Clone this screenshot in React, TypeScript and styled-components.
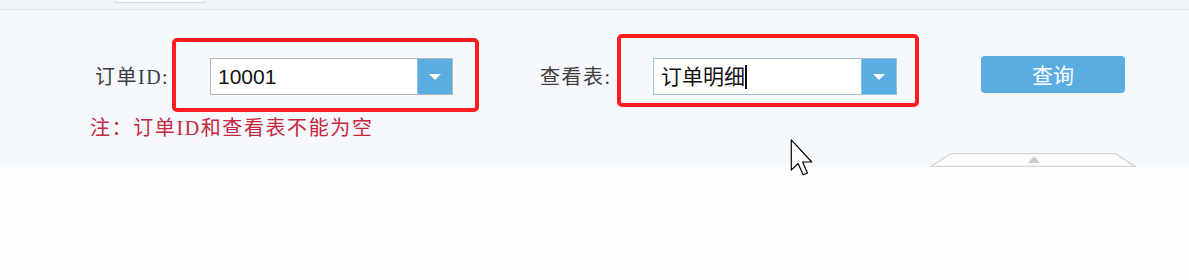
import React from "react";
import styled, { createGlobalStyle } from "styled-components";

const GlobalStyle = createGlobalStyle`
  html, body {
    margin: 0;
    padding: 0;
    background: #fefefe;
  }
  body {
    width: 1189px;
    height: 280px;
    overflow: hidden;
    font-family: "Liberation Sans", "Noto Sans CJK SC", sans-serif;
  }
`;

const Page = styled.div`
  position: relative;
  width: 1189px;
  height: 280px;
  background: #fefefe;
`;

const TopStrip = styled.div`
  height: 9px;
  background: #f3f6f9;
  border-bottom: 1px solid #e3e7eb;
  padding-left: 115px;
`;

const TopTab = styled.div`
  width: 88px;
  height: 2px;
  background: #fbfcfd;
  border: 1px solid #d6dadf;
  border-top: none;
`;

const Panel = styled.div`
  height: 157px;
  box-sizing: border-box;
  background: #f5f8fc;
  padding-top: 24px;
  display: flex;
  flex-direction: column;
`;

const FormRow = styled.div`
  display: flex;
  align-items: baseline;
  padding-left: 95px;
`;

const Field = styled.div<{ $gap?: number }>`
  display: flex;
  align-items: baseline;
  margin-left: ${(p) => p.$gap ?? 0}px;
`;

const Label = styled.span`
  width: 77px;
  font-family: "Liberation Serif", "Noto Sans CJK SC", serif;
  font-size: 20px;
  letter-spacing: 1.5px;
  color: #3c3c3c;
  white-space: nowrap;
`;

const Highlight = styled.div<{ $pad: string }>`
  border: 4px solid #ff1c1c;
  border-radius: 5px;
  padding: ${(p) => p.$pad};
`;

const Select = styled.div<{ $w: number; $focus?: boolean }>`
  display: flex;
  width: ${(p) => p.$w}px;
  height: 37px;
  box-sizing: border-box;
  border: 1px solid ${(p) => (p.$focus ? "#9fc0da" : "#b5b5b5")};
  background: #ffffff;
`;

const SelectText = styled.div`
  flex: 1;
  padding-left: 7px;
  font-size: 21px;
  line-height: 35px;
  color: #111;
  display: flex;
  align-items: baseline;
`;

const Caret = styled.span`
  display: inline-block;
  width: 2px;
  height: 24px;
  background: #111;
  align-self: center;
`;

const DropButton = styled.div`
  width: 34px;
  background: #5aade2;
  border-left: 1px solid #8fc2e6;
  display: flex;
  align-items: center;
  justify-content: center;
`;

const QueryButton = styled.button`
  width: 144px;
  height: 37px;
  margin-left: 62px;
  border: none;
  border-radius: 4px;
  background: #5aade2;
  color: #ffffff;
  font-family: "Noto Sans CJK SC", sans-serif;
  font-size: 21px;
  align-self: center;
  position: relative;
  top: 1px;
`;

const Note = styled.div`
  margin-top: 4px;
  padding-left: 90px;
  font-family: "Liberation Serif", "Noto Sans CJK SC", serif;
  font-size: 20px;
  letter-spacing: 1.6px;
  line-height: 24px;
  color: #c8263c;
`;

const HandleRow = styled.div`
  margin-top: auto;
  padding-left: 930px;
  height: 14px;
  display: flex;
`;

const Cursor = styled.svg`
  position: absolute;
  left: 790px;
  top: 139px;
`;

const Triangle = () => (
  <svg width="14" height="8" viewBox="0 0 14 8">
    <path d="M1 1 H13 L7 7 Z" fill="#ffffff" />
  </svg>
);

const App: React.FC = () => {
  return (
    <Page>
      <GlobalStyle />
      <TopStrip>
        <TopTab />
      </TopStrip>
      <Panel>
        <FormRow>
          <Field>
            <Label>订单ID:</Label>
            <Highlight $pad="16px 22px 13px 34px">
              <Select $w={243}>
                <SelectText>10001</SelectText>
                <DropButton>
                  <Triangle />
                </DropButton>
              </Select>
            </Highlight>
          </Field>
          <Field $gap={61}>
            <Label>查看表:</Label>
            <Highlight $pad="20px 18px 8px 32px">
              <Select $w={244} $focus>
                <SelectText>
                  订单明细
                  <Caret />
                </SelectText>
                <DropButton>
                  <Triangle />
                </DropButton>
              </Select>
            </Highlight>
          </Field>
          <QueryButton>查询</QueryButton>
        </FormRow>
        <Note>注：订单ID和查看表不能为空</Note>
        <HandleRow>
          <svg width="206" height="14" viewBox="0 0 206 14">
            <path d="M21 0.5 H185 L205 13.5 H1 Z" fill="#fdfdfd" stroke="#d3d6da" strokeWidth="1.4" />
            <path d="M98 10 L104 3 L110 10 Z" fill="#c9cdd1" />
          </svg>
        </HandleRow>
      </Panel>
      <Cursor width="24" height="37" viewBox="0 0 12 19">
        <path
          d="M0.5 0.5 L0.5 16 L4 12.6 L6.6 18.4 L8.8 17.5 L6.3 11.8 L11 11.8 Z"
          fill="#ffffff"
          stroke="#000000"
          strokeWidth="0.6"
          strokeLinejoin="round"
        />
      </Cursor>
    </Page>
  );
};

export default App;
